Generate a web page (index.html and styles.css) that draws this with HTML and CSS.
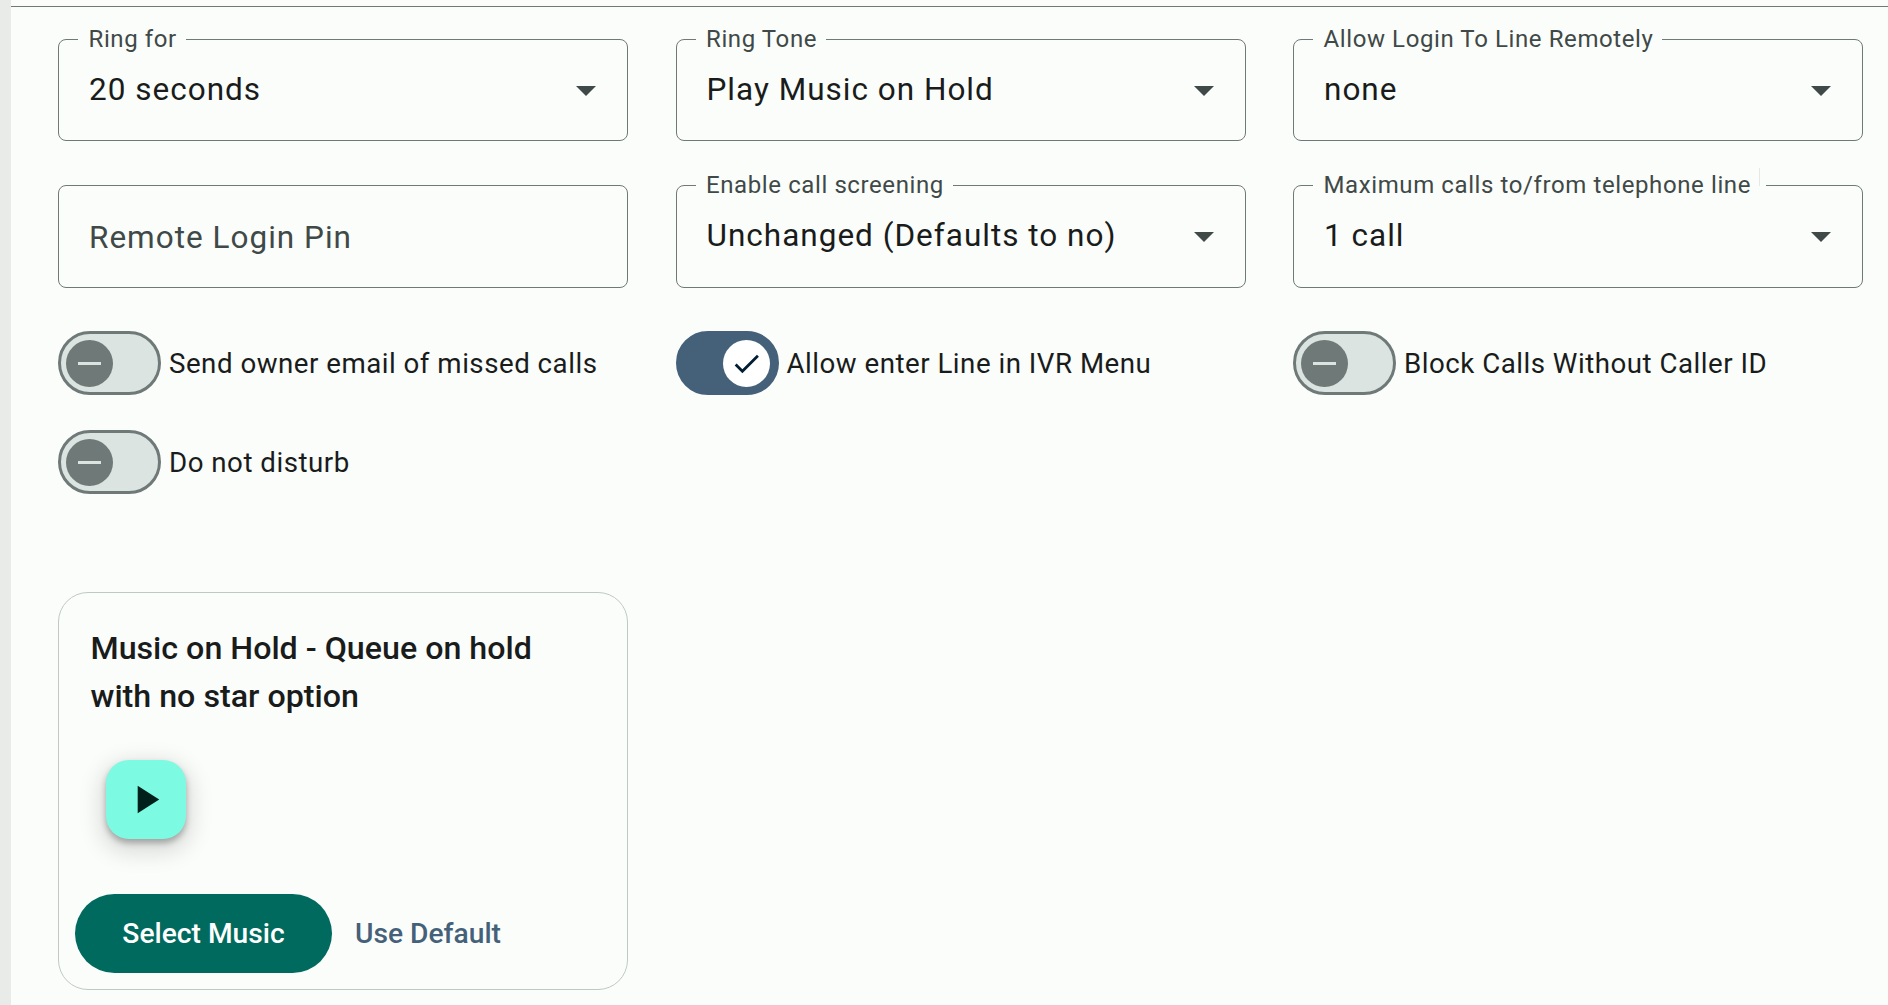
FILE: index.html
```html
<!DOCTYPE html>
<html lang="en">

<head>
    <meta charset="UTF-8">
    <meta name="viewport" content="width=device-width, initial-scale=1.0">
    <title>Line settings</title>
    <link rel="stylesheet" href="styles.css">
</head>

<body>
    <main class="panel">
        <div class="content">
            <div class="fields">
                <div class="field">
                    <span class="field-label">Ring for</span>
                    <span class="field-value">20 seconds</span>
                    <span class="arrow"></span>
                </div>
                <div class="field">
                    <span class="field-label">Ring Tone</span>
                    <span class="field-value">Play Music on Hold</span>
                    <span class="arrow"></span>
                </div>
                <div class="field">
                    <span class="field-label">Allow Login To Line Remotely</span>
                    <span class="field-value">none</span>
                    <span class="arrow"></span>
                </div>
                <div class="field">
                    <span class="field-value placeholder">Remote Login Pin</span>
                </div>
                <div class="field">
                    <span class="field-label">Enable call screening</span>
                    <span class="field-value">Unchanged (Defaults to no)</span>
                    <span class="arrow"></span>
                </div>
                <div class="field">
                    <span class="field-label clipped">Maximum calls to/from telephone line</span>
                    <span class="field-value">1 call</span>
                    <span class="arrow"></span>
                </div>
            </div>

            <div class="toggles">
                <div class="toggle">
                    <span class="switch"><span class="knob"><span class="minus"></span></span></span>
                    <span>Send owner email of missed calls</span>
                </div>
                <div class="toggle">
                    <span class="switch on">
                        <span class="knob">
                            <svg width="33" height="33" viewBox="0 0 24 24"><path d="M9 16.2 4.8 12l-1.4 1.4L9 19 21 7l-1.4-1.4z" fill="#001d32"/></svg>
                        </span>
                    </span>
                    <span>Allow enter Line in IVR Menu</span>
                </div>
                <div class="toggle">
                    <span class="switch"><span class="knob"><span class="minus"></span></span></span>
                    <span>Block Calls Without Caller ID</span>
                </div>
                <div class="toggle">
                    <span class="switch"><span class="knob"><span class="minus"></span></span></span>
                    <span>Do not disturb</span>
                </div>
            </div>

            <section class="card">
                <h2 class="card-title">Music on Hold - Queue on hold with no star option</h2>
                <button class="fab">
                    <svg width="47" height="47" viewBox="0 0 24 24"><path d="M8 5v14l11-7z" fill="#00201b"/></svg>
                </button>
                <div class="actions">
                    <button class="btn-filled">Select Music</button>
                    <button class="btn-text">Use Default</button>
                </div>
            </section>
        </div>
    </main>
</body>

</html>
```
FILE: styles.css
```css
* {
    margin: 0;
    padding: 0;
    box-sizing: border-box;
}

html,
body {
    height: 100%;
}

body {
    background: #e9ebe9;
    font-family: Roboto, "Liberation Sans", sans-serif;
    color: #191c1b;
    padding-left: 11px;
    overflow: hidden;
}

.panel {
    height: 100%;
    background: #fbfdfb;
    padding-top: 6px;
}

.content {
    border-top: 1px solid #6f7977;
    padding: 32px 24px 0 47px;
}

.fields {
    display: grid;
    grid-template-columns: repeat(3, 570px);
    grid-template-rows: 102px 103px;
    column-gap: 47.5px;
    row-gap: 44px;
}

.field {
    position: relative;
    border: 1.5px solid #6f7977;
    border-radius: 8px;
    display: flex;
    align-items: center;
    padding: 0 30px;
}

.field-label {
    position: absolute;
    top: -14px;
    left: 19px;
    padding: 0 9px 0 10.5px;
    background: #fbfdfb;
    font-size: 24px;
    line-height: 27px;
    letter-spacing: 0.6px;
    color: #3f4947;
}

.field-label.clipped {
    padding-right: 15px;
}

.field-label.clipped::after {
    content: "";
    position: absolute;
    top: -4px;
    right: 6px;
    width: 1px;
    height: 18px;
    background: #e4e8e6;
}

.field-value {
    font-size: 31.5px;
    letter-spacing: 1px;
    margin-top: -2px;
}

.placeholder {
    color: #3f4947;
    margin-top: 1px;
}

.arrow {
    position: absolute;
    right: 31px;
    top: 46px;
    border-left: 10px solid transparent;
    border-right: 10px solid transparent;
    border-top: 10px solid #3f4947;
}

.toggles {
    display: grid;
    grid-template-columns: repeat(3, 570px);
    column-gap: 47.5px;
    row-gap: 35px;
    margin-top: 43px;
}

.toggle {
    display: flex;
    align-items: center;
    gap: 8px;
    height: 64px;
    font-size: 27.7px;
    letter-spacing: 0.5px;
}

.switch {
    flex: none;
    width: 103px;
    height: 64px;
    border: 3px solid #6f7977;
    border-radius: 32px;
    background: #dbe4e1;
    display: flex;
    align-items: center;
    padding-left: 5px;
}

.knob {
    width: 47px;
    height: 47px;
    border-radius: 50%;
    background: #6f7977;
    display: flex;
    align-items: center;
    justify-content: center;
}

.minus {
    width: 23px;
    height: 3px;
    background: #dbe4e1;
}

.switch.on {
    background: #456179;
    border-color: #456179;
    padding-left: 44px;
}

.switch.on .knob {
    background: #fff;
}

.card {
    width: 570px;
    height: 398px;
    margin-top: 98px;
    border: 1px solid #c0c8c6;
    border-radius: 30px;
    padding: 31px 16px 0;
}

.card-title {
    font-size: 32.2px;
    font-weight: 500;
    line-height: 48px;
    padding: 0 15.5px;
    color: #191c1b;
}

.fab {
    display: flex;
    align-items: center;
    justify-content: center;
    width: 80px;
    height: 79px;
    margin: 40px 0 0 31px;
    border: 0;
    border-radius: 23px;
    background: #7cfbe2;
    box-shadow: 0 8px 22px 6px rgba(0, 0, 0, 0.13), 0 4px 6px rgba(0, 0, 0, 0.28);
}

.fab svg {
    margin-left: -2px;
    margin-top: -1px;
}

.actions {
    display: flex;
    align-items: center;
    gap: 23px;
    margin-top: 55px;
}

.btn-filled,
.btn-text {
    font-family: inherit;
    font-size: 28.2px;
    font-weight: 500;
    border: 0;
    background: none;
}

.btn-filled {
    width: 257px;
    height: 79px;
    border-radius: 40px;
    background: #006a5e;
    color: #fff;
}

.btn-text {
    color: #456179;
}
```
